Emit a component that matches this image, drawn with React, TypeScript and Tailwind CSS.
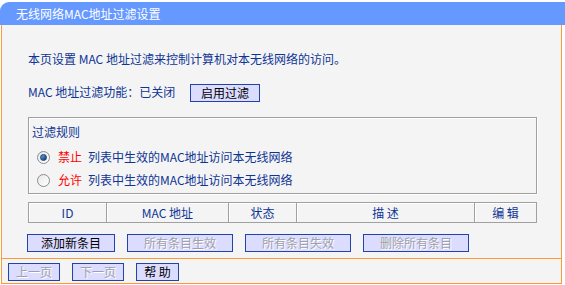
import React from "react";

const font = { fontFamily: "'Noto Sans CJK SC', 'Liberation Sans', sans-serif" };

function Btn({ label, w, disabled }: { label: string; w: string; disabled?: boolean }) {
  return (
    <button
      type="button"
      className={`${w} h-[18px] border border-[#2244aa] bg-[#dcdcff] text-[12px] leading-none flex items-center justify-center ${
        disabled ? "text-[#a0a0a8] [text-shadow:1px_1px_0_#fff]" : "text-black"
      }`}
    >
      {label}
    </button>
  );
}

function Radio({ checked }: { checked?: boolean }) {
  return (
    <span className="w-[13px] h-[13px] rounded-full border border-[#8c8c8c] bg-gradient-to-br from-[#e8e8e8] to-[#ffffff] flex items-center justify-center">
      {checked && <span className="w-[7px] h-[7px] rounded-full bg-gradient-to-br from-[#6aa6e0] to-[#0b3d80] border border-[#123c6e]" />}
    </span>
  );
}

const cols = [
  { label: "ID", w: "w-[78px]" },
  { label: "MAC 地址", w: "w-[122px]" },
  { label: "状态", w: "w-[68px]" },
  { label: "描 述", w: "w-[178px]" },
  { label: "编 辑", w: "w-[62px]" },
];

export default function App() {
  return (
    <div className="w-[565px] h-[285px] bg-white text-[12px] text-[#0f3494] pt-[2px]" style={font}>
      <div className="h-[23px] bg-[#6699ff] rounded-tl-[9px] text-white pl-[16px] flex items-center">
        无线网络MAC地址过滤设置
      </div>
      <div className="ml-[1px] w-[561px] h-[259px] border-x border-b border-[#ff9933] bg-[#f4f4f4] flex flex-col">
        <p className="mt-[26px] ml-[26px] leading-[16px]">本页设置 MAC 地址过滤来控制计算机对本无线网络的访问。</p>
        <div className="mt-[17px] ml-[26px] flex items-center h-[18px]">
          <span className="w-[162px] -mt-[2px]">MAC 地址过滤功能：已关闭</span>
          <Btn label="启用过滤" w="w-[70px]" />
        </div>
        <div className="mt-[15px] ml-[26px] w-[509px] h-[77px] border border-[#a0a0a0] shadow-[inset_1px_1px_0_#fff,1px_1px_0_#fff] flex flex-col">
          <span className="mt-[6px] ml-[3px] leading-[16px]">过滤规则</span>
          <div className="mt-[9px] ml-[8px] flex items-center h-[16px]">
            <Radio checked />
            <span className="ml-[8px] text-[#ff0000]">禁止</span>
            <span className="ml-[6px]">列表中生效的MAC地址访问本无线网络</span>
          </div>
          <div className="mt-[7px] ml-[8px] flex items-center h-[16px]">
            <Radio />
            <span className="ml-[8px] text-[#ff0000]">允许</span>
            <span className="ml-[6px]">列表中生效的MAC地址访问本无线网络</span>
          </div>
        </div>
        <div className="mt-[8px] ml-[26px] w-[509px] h-[21px] flex border-t border-l border-[#a0a0a0] shadow-[inset_0_1px_0_#fff]">
          {cols.map((c) => (
            <div
              key={c.label}
              className={`${c.w} h-[20px] border-r border-b border-[#a0a0a0] shadow-[inset_1px_1px_0_#fff] flex items-center justify-center`}
            >
              {c.label}
            </div>
          ))}
        </div>
        <div className="mt-[11px] ml-[25px] flex gap-[12px]">
          <Btn label="添加新条目" w="w-[88px]" />
          <Btn label="所有条目生效" w="w-[106px]" disabled />
          <Btn label="所有条目失效" w="w-[106px]" disabled />
          <Btn label="删除所有条目" w="w-[106px]" disabled />
        </div>
        <div className="mt-[6px] h-px bg-[#ff9933]" />
        <div className="mt-[4px] ml-[6px] flex gap-[12px]">
          <Btn label="上一页" w="w-[52px]" disabled />
          <Btn label="下一页" w="w-[52px]" disabled />
          <Btn label="帮 助" w="w-[43px]" />
        </div>
      </div>
    </div>
  );
}
